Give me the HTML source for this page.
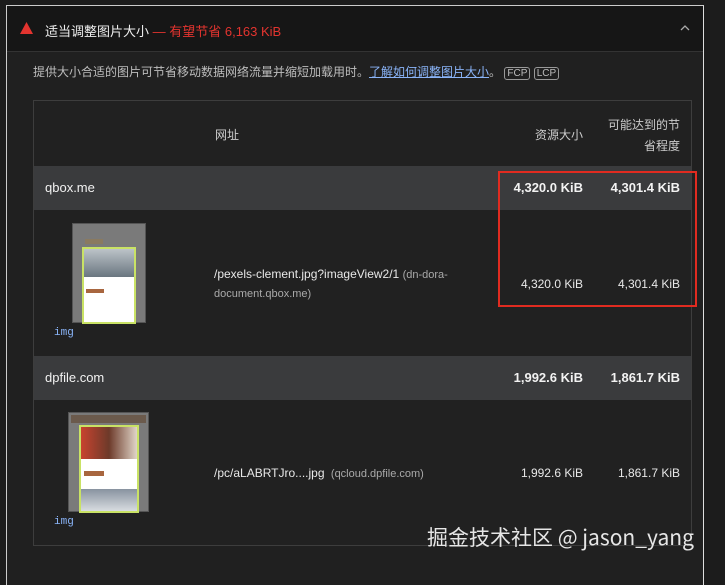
<!DOCTYPE html>
<html><head><meta charset="utf-8"><style>
*{margin:0;padding:0;box-sizing:border-box}
body{width:725px;height:567px;background:#1c1c1c;position:relative;overflow:hidden;font-family:"Liberation Sans","Noto Sans CJK SC",sans-serif;color:#e0e0e0}
.a{position:absolute;white-space:nowrap}
.panel{position:absolute;left:6px;top:5px;width:698px;height:580px;border-left:1px solid #ccc;border-top:1px solid #ccc;border-right:1px solid #ddd;background:#202020}
.head{position:absolute;left:7px;top:6px;width:696px;height:46px;background:#161616;border-bottom:1px solid #333}
.tbl{position:absolute;left:33px;top:100px;width:659px;height:446px;border:1px solid #3d3d3d;background:#212121}
.grp{position:absolute;left:34px;width:657px;height:44px;background:#3a3b3d}
.b{font-weight:bold;font-size:13px;color:#f2f2f2}
.n{font-size:12px;color:#e8e8e8}
.r1{right:142px}.r2{right:45px}
.thumb{position:absolute;background:#7a7a7a;border:1px solid #555}
.in{position:absolute;border:2px solid #c9e265;background:#fff}
</style></head><body>
<div class="panel"></div>
<div class="head"></div>
<svg class="a" style="left:20px;top:22px" width="13" height="12"><polygon points="6.5,0 13,12 0,12" fill="#e3342f"/></svg>
<div class="a" style="left:45px;top:21px;font-size:13px;color:#eee">适当调整图片大小 <span style="color:#e3342f">— 有望节省 6,163 KiB</span></div>
<svg class="a" style="left:679px;top:24px" width="12" height="8"><path d="M2 6 L6 2 L10 6" stroke="#aaa" stroke-width="1.3" fill="none"/></svg>
<div class="a" style="left:33px;top:63px;font-size:12px;color:#bdbdbd">提供大小合适的图片可节省移动数据网络流量并缩短加载用时。<span style="color:#8ab4f8;text-decoration:underline">了解如何调整图片大小</span>。 <span style="border:1px solid #999;border-radius:3px;padding:0 2px;font-size:10px">FCP</span> <span style="border:1px solid #999;border-radius:3px;padding:0 2px;font-size:10px">LCP</span></div>
<div class="tbl"></div>
<div class="a" style="left:215px;top:126px;font-size:12px;color:#ccc">网址</div>
<div class="a r1" style="top:126px;font-size:12px;color:#ccc">资源大小</div>
<div class="a r2" style="top:115px;font-size:12px;color:#ccc;text-align:right;line-height:21px">可能达到的节<br>省程度</div>
<div class="grp" style="top:166px"></div>
<div class="a b" style="left:45px;top:180px;font-weight:normal">qbox.me</div>
<div class="a b r1" style="top:180px">4,320.0 KiB</div>
<div class="a b r2" style="top:180px">4,301.4 KiB</div>
<div class="thumb" style="left:72px;top:223px;width:74px;height:100px"><div style="position:absolute;left:12px;top:15px;width:18px;height:5px;background:#8a7a60"></div><div class="in" style="left:9px;top:23px;width:54px;height:77px"><div style="height:28px;background:linear-gradient(#bcc3c8,#6a7680)"></div><div style="margin:12px 0 0 2px;width:18px;height:4px;background:#a8663f"></div></div></div>
<div class="a" style="left:54px;top:327px;font-family:'Liberation Mono',monospace;font-size:11px;color:#8ab4f8">img</div>
<div class="a n" style="left:214px;top:267px">/pexels-clement.jpg?imageView2/1 <span style="color:#aaa;font-size:11px">(dn-dora-</span></div>
<div class="a" style="left:214px;top:288px;color:#aaa;font-size:11px">document.qbox.me)</div>
<div class="a n r1" style="top:277px">4,320.0 KiB</div>
<div class="a n r2" style="top:277px">4,301.4 KiB</div>
<div class="grp" style="top:356px"></div>
<div class="a b" style="left:45px;top:370px;font-weight:normal">dpfile.com</div>
<div class="a b r1" style="top:370px">1,992.6 KiB</div>
<div class="a b r2" style="top:370px">1,861.7 KiB</div>
<div class="thumb" style="left:68px;top:412px;width:81px;height:100px"><div style="position:absolute;left:2px;top:2px;width:75px;height:8px;background:#6b5a4c"></div><div class="in" style="left:10px;top:12px;width:60px;height:88px"><div style="height:32px;background:linear-gradient(90deg,#c8432f,#6d3a2a,#e0d5c8)"></div><div style="margin:12px 0 0 3px;width:20px;height:5px;background:#a8663f"></div><div style="position:absolute;left:0;bottom:0;width:56px;height:22px;background:linear-gradient(#8893a0,#d8dce0)"></div></div></div>
<div class="a" style="left:54px;top:516px;font-family:'Liberation Mono',monospace;font-size:11px;color:#8ab4f8">img</div>
<div class="a n" style="left:214px;top:466px">/pc/aLABRTJro....jpg <span style="color:#aaa;font-size:11px">&nbsp;(qcloud.dpfile.com)</span></div>
<div class="a n r1" style="top:466px">1,992.6 KiB</div>
<div class="a n r2" style="top:466px">1,861.7 KiB</div>
<div class="a" style="left:498px;top:171px;width:199px;height:136px;border:2px solid #e02b20"></div>
<div class="a" style="left:427px;top:522px;font-size:21px;color:#e6e6e6;font-family:'Noto Sans CJK SC',sans-serif">掘金技术社区 @ jason_yang</div>
</body></html>
